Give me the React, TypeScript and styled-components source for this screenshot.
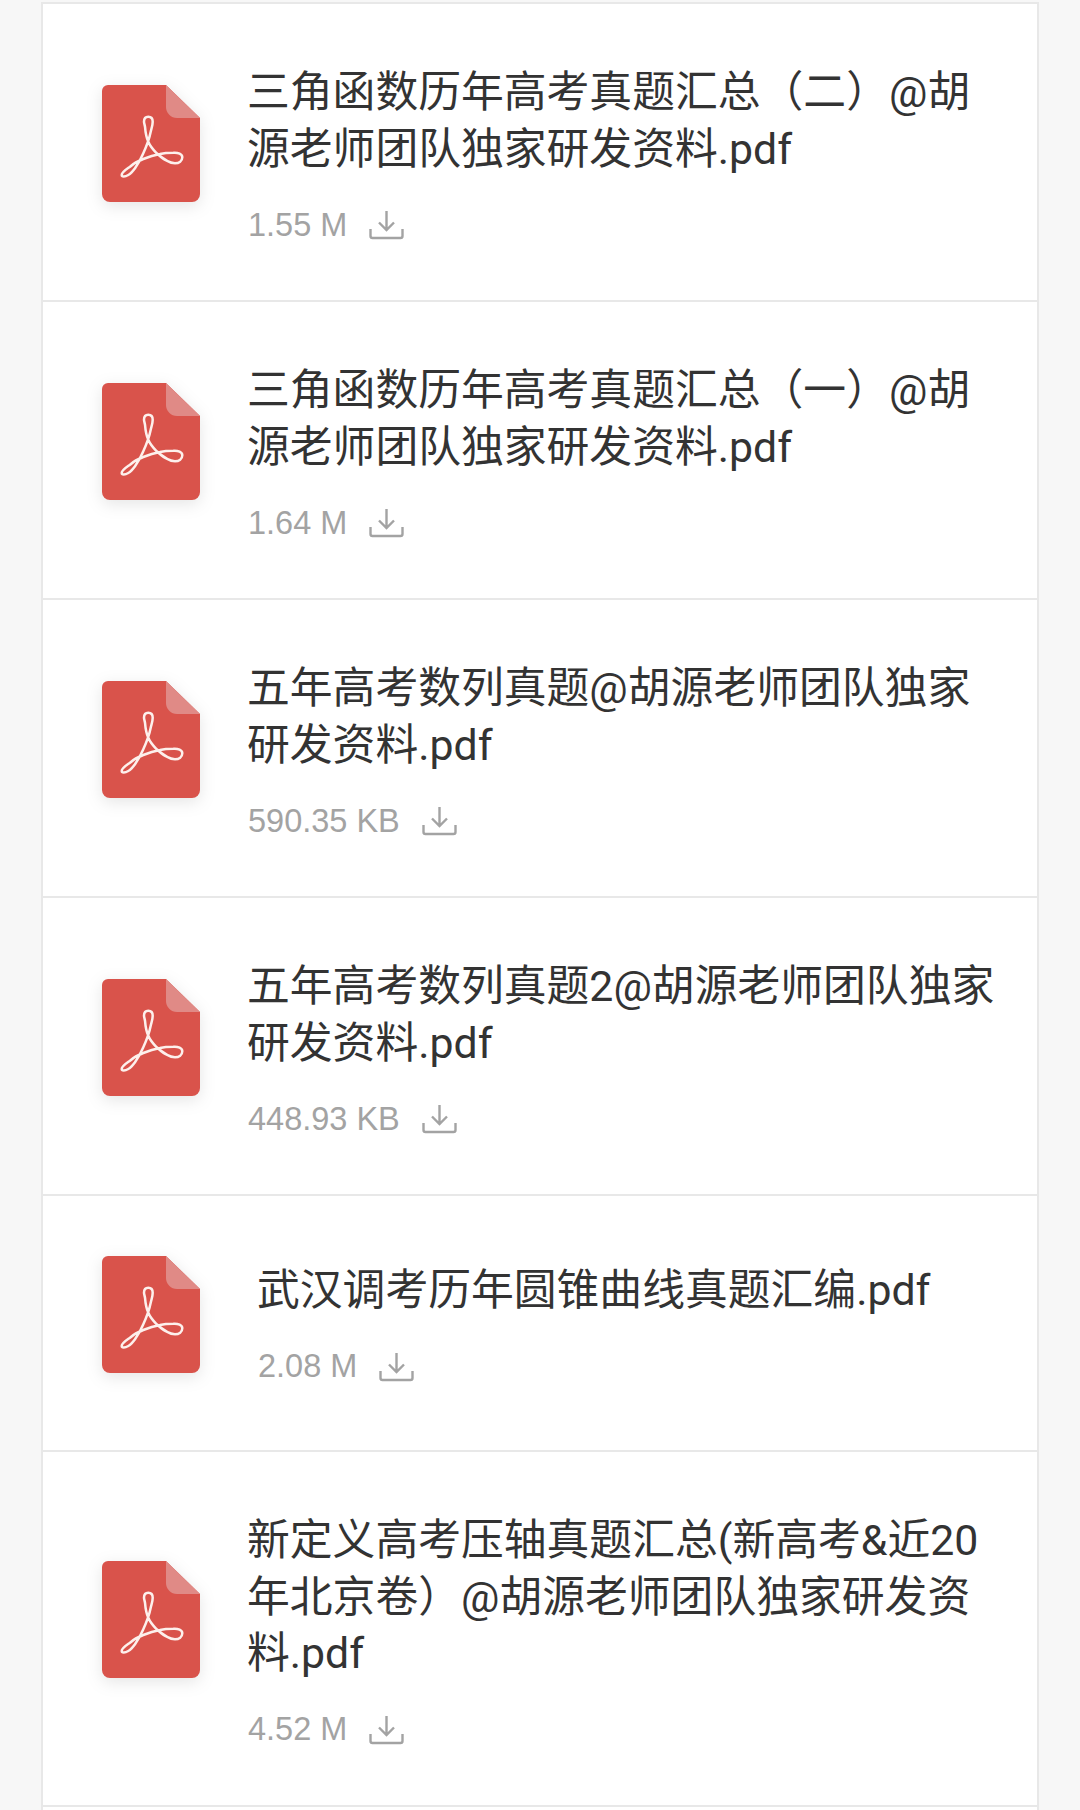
import React from 'react';
import styled, { createGlobalStyle } from 'styled-components';

const files = [
  { title: '三角函数历年高考真题汇总（二）@胡源老师团队独家研发资料.pdf', size: '1.55 M' },
  { title: '三角函数历年高考真题汇总（一）@胡源老师团队独家研发资料.pdf', size: '1.64 M' },
  { title: '五年高考数列真题@胡源老师团队独家研发资料.pdf', size: '590.35 KB' },
  { title: '五年高考数列真题2@胡源老师团队独家研发资料.pdf', size: '448.93 KB' },
  { title: '武汉调考历年圆锥曲线真题汇编.pdf', size: '2.08 M', indent: true },
  { title: '新定义高考压轴真题汇总(新高考&近20年北京卷）@胡源老师团队独家研发资料.pdf', size: '4.52 M' },
];

const PdfIcon = () => (
  <IconSvg viewBox="0 0 98 117" width="98" height="117">
    <path
      d="M6 0H64L98 33V109a8 8 0 0 1-8 8H8a8 8 0 0 1-8-8V6a6 6 0 0 1 6-6Z"
      fill="#d9534b"
    />
    <path d="M64 0L98 33H75a11 11 0 0 1-11-11Z" fill="#e08a86" />
    <path
      d="M43 41.7C43.5 48 44 52 46.3 56.7C48 61 51 64.5 54.7 68.3C60 73 66 78.3 73 78.3C77 78.3 80.3 76 80.3 72.3C80.3 69 76 67.3 71.3 67.7C66 67.7 62 68 58 69C52 70 46 72 41.3 74C36 76 31 79 28 81.7C24 84.5 19.7 87 19.7 90C19.7 92 23 92 26.3 90C29 88.5 31 86 33 83.3C36 79 39 74 41.3 68.3C45 60 47.5 53 48.7 46.7C49.7 42.5 50.7 40 50.7 36.7C50.7 33.5 49 31.7 46.3 31.7C43.5 31.7 42 33.5 42 36.7C42 38 42.7 40 43 41.7Z"
      fill="none"
      stroke="#fdf0ec"
      strokeWidth="2.5"
      strokeLinejoin="round"
    />
  </IconSvg>
);

const DownloadIcon = () => (
  <svg viewBox="0 0 35 30" width="35" height="30" fill="none" stroke="#a3a3a3" strokeWidth="2.4">
    <path d="M17.5 1V19M10 12.5L17.5 20L25 12.5" />
    <path d="M1.5 19V26a2 2 0 0 0 2 2H31.5a2 2 0 0 0 2-2V19" />
  </svg>
);

const App = () => (
  <>
    <GlobalStyle />
    <Page>
      <List>
        {files.map((file) => (
          <Row key={file.title}>
            <PdfIcon />
            <Info $indent={file.indent}>
              <Title>{file.title}</Title>
              <Meta>
                {file.size}
                <DownloadIcon />
              </Meta>
            </Info>
          </Row>
        ))}
        <NextRow />
      </List>
    </Page>
  </>
);

const GlobalStyle = createGlobalStyle`
  html, body {
    margin: 0;
    background: #f7f7f7;
    overflow: hidden;
  }
`;

const Page = styled.div`
  width: 1080px;
  height: 1810px;
  padding-top: 2px;
  box-sizing: border-box;
  overflow: hidden;
  font-family: "Liberation Sans", "Noto Sans CJK SC", sans-serif;
`;

const List = styled.div`
  width: 998px;
  margin-left: 41px;
  background: #fff;
  border-left: 2px solid #e8e8e8;
  border-right: 2px solid #e8e8e8;
  box-sizing: border-box;
`;

const Row = styled.div`
  display: flex;
  align-items: center;
  padding: 60px 30px 55px 59px;
  border-top: 2px solid #e8e8e8;
`;

const NextRow = styled.div`
  height: 20px;
  border-top: 2px solid #e8e8e8;
`;

const IconSvg = styled.svg`
  flex: none;
  margin-bottom: 22px;
  margin-right: 47px;
  filter: drop-shadow(0 4px 8px rgba(0, 0, 0, 0.1));
`;

const Info = styled.div<{ $indent?: boolean }>`
  flex: 1;
  min-width: 0;
  padding: ${(p) => (p.$indent ? '6px 0 8px 10px' : '0')};
`;

const Title = styled.div`
  font-family: Roboto, "Noto Sans CJK SC", sans-serif;
  font-size: 42.8px;
  line-height: 56.5px;
  font-weight: 400;
  color: #333;
`;

const Meta = styled.div`
  display: flex;
  align-items: center;
  gap: 22px;
  height: 40px;
  margin-top: 28px;
  padding-left: 1px;
  font-size: 32.5px;
  color: #a3a3a3;
`;

export default App;
